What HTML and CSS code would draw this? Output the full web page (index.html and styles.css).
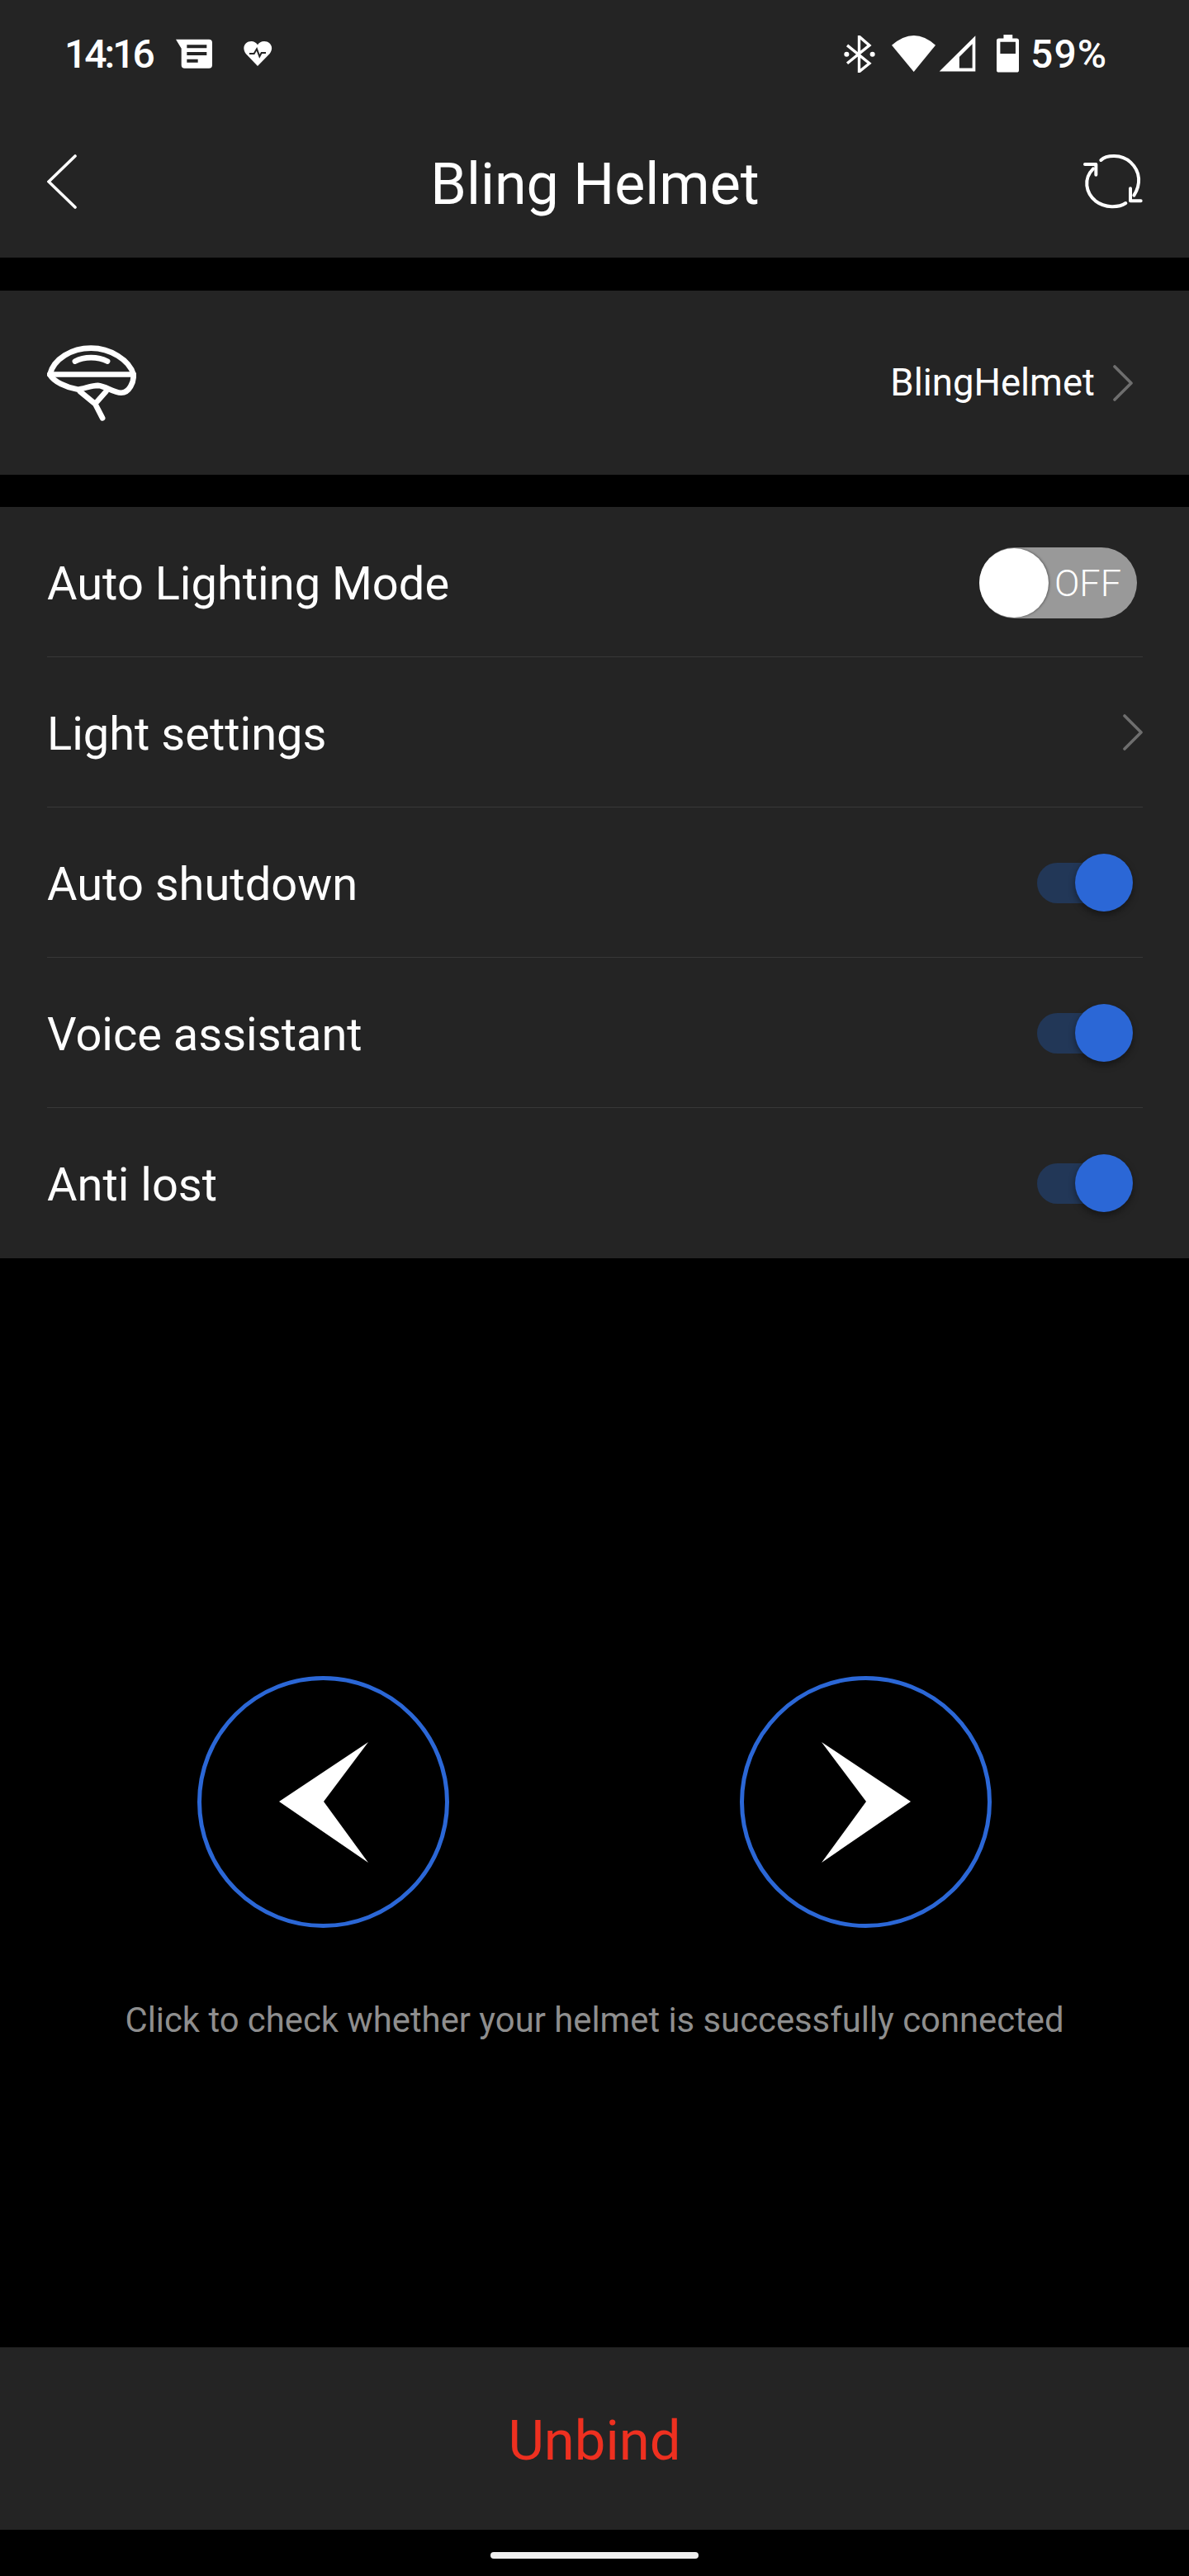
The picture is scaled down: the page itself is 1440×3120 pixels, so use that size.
FILE: index.html
```html
<!DOCTYPE html>
<html lang="en">
<head>
  <meta charset="UTF-8">
  <title>Bling Helmet</title>
  <link rel="stylesheet" href="styles.css">
</head>
<body>
  <header class="top">
    <div class="status">
      <div class="status-left">
        <span class="clock">14:16</span>
        <svg class="ic-notes" viewBox="40 40 132 108"><path fill="#fff" d="M40 42H160Q172 42 172 54V135Q172 147 160 147H72Q60 147 60 135V75Z"/><path fill="#242424" d="M80 62h72v12H80zM80 88h72v12H80zM80 114h40v12H80z"/></svg>
        <svg class="ic-heart" viewBox="284 48 108 94"><path fill="#fff" d="M338 140L295 95C278 70 295 50 315 50C325 50 333 55 338 63C343 55 351 50 362 50C382 50 400 70 382 95Z"/><path fill="none" stroke="#242424" stroke-width="6" d="M308 95H325L335 78L345 105L352 92H368"/></svg>
      </div>
      <div class="status-right">
        <svg class="ic-bt" viewBox="30 25 113 133"><path fill="none" stroke="#fff" stroke-width="10" d="M42 60L122 125L85 155V28L122 60L42 125"/><circle fill="#fff" cx="40" cy="92" r="9"/><circle fill="#fff" cx="133" cy="92" r="9"/></svg>
        <svg class="ic-wifi" viewBox="205 25 157 130"><path fill="#fff" d="M205 60Q285-10 362 60L284 155Z"/></svg>
        <svg class="ic-signal" viewBox="376 28 134 130"><path fill="#fff" fill-rule="evenodd" d="M378 157L508 28V157ZM450 145H497V58L450 105Z"/></svg>
        <svg class="ic-battery" viewBox="585 22 80 136"><path fill="#fff" fill-rule="evenodd" d="M610 22H642V35H657Q665 35 665 43V149Q665 157 657 157H593Q585 157 585 149V43Q585 35 593 35H610ZM598 48V90H653V48Z"/></svg>
        <span class="battery-pct">59%</span>
      </div>
    </div>
    <div class="nav">
      <svg class="ic-back" viewBox="0 0 36 66"><path fill="none" stroke="#fff" stroke-width="3.6" stroke-linecap="round" d="M34 2L2 33L34 64"/></svg>
      <h1 class="title">Bling Helmet</h1>
      <svg class="ic-refresh" viewBox="36 30 216 210"><g fill="none" stroke="#fff" stroke-width="12" stroke-linecap="round" stroke-linejoin="round"><path d="M100 57C120 38 175 34 208 65C245 100 245 145 220 185"/><path d="M207 160V205H245"/><path d="M190 213C165 230 115 232 80 205C45 175 35 125 72 88"/><path d="M42 72H82V110"/></g></svg>
    </div>
  </header>

  <section class="device">
    <svg class="ic-helmet" viewBox="170 232 325 275"><g fill="none" stroke="#fff" stroke-width="20" stroke-linecap="round" stroke-linejoin="round"><path d="M180 338C195 280 260 242 330 242C400 242 470 285 485 338C487 365 470 405 440 405C410 405 385 380 355 378C330 378 300 392 280 392C240 385 195 365 180 338Z"/><path d="M180 338H485"/><path d="M272 290C305 272 355 272 390 290"/><path d="M290 400L345 445L385 400M345 445L372 497"/></g></svg>
    <div class="device-link">
      <span class="device-name">BlingHelmet</span>
      <svg class="ic-chevron" viewBox="0 0 24 44"><path fill="none" stroke="#6e6e6e" stroke-width="3.6" stroke-linecap="round" stroke-linejoin="round" d="M2 2L22 22L2 42"/></svg>
    </div>
  </section>

  <section class="settings">
    <div class="row">
      <span class="row-label">Auto Lighting Mode</span>
      <div class="switch-off"><span class="switch-off-knob"></span>OFF</div>
    </div>
    <div class="row">
      <span class="row-label">Light settings</span>
      <svg class="ic-chevron" viewBox="0 0 24 44"><path fill="none" stroke="#6e6e6e" stroke-width="3.6" stroke-linecap="round" stroke-linejoin="round" d="M2 2L22 22L2 42"/></svg>
    </div>
    <div class="row">
      <span class="row-label">Auto shutdown</span>
      <div class="switch-on"><span class="switch-on-knob"></span></div>
    </div>
    <div class="row">
      <span class="row-label">Voice assistant</span>
      <div class="switch-on"><span class="switch-on-knob"></span></div>
    </div>
    <div class="row">
      <span class="row-label">Anti lost</span>
      <div class="switch-on"><span class="switch-on-knob"></span></div>
    </div>
  </section>

  <main class="check">
    <div class="check-buttons">
      <div class="round-btn">
        <svg class="ic-arrow" viewBox="0 0 108 146"><path fill="#fff" d="M108 0L54 72L108 146L0 72Z"/></svg>
      </div>
      <div class="round-btn">
        <svg class="ic-arrow" viewBox="0 0 108 146"><path fill="#fff" d="M0 0L108 72L0 146L54 72Z"/></svg>
      </div>
    </div>
    <p class="check-hint">Click to check whether your helmet is successfully connected</p>
  </main>

  <div class="unbind">Unbind</div>

  <div class="home-area"><span class="home-bar"></span></div>
</body>
</html>
```

FILE: styles.css
```css
* {
  box-sizing: border-box;
}

body {
  margin: 0;
  width: 1440px;
  height: 3120px;
  overflow: hidden;
  display: flex;
  flex-direction: column;
  background: #000;
  color: #fff;
  font-family: Roboto, sans-serif;
}

svg {
  display: block;
  flex: none;
}

.top {
  height: 312px;
  background: #242424;
}

.status {
  height: 132px;
  padding: 0 99px 2px 78px;
  display: flex;
  justify-content: space-between;
  align-items: center;
  font-size: 48px;
  font-weight: 500;
}

.status-left,
.status-right {
  display: flex;
  align-items: center;
}

.clock {
  letter-spacing: -3px;
}

.ic-notes {
  width: 44px;
  height: 36px;
  margin-left: 28px;
}

.ic-heart {
  width: 36px;
  height: 32px;
  margin-left: 37px;
}

.ic-bt {
  width: 38px;
  height: 45px;
}

.ic-wifi {
  width: 53px;
  height: 44px;
  margin-left: 20px;
}

.ic-signal {
  width: 45px;
  height: 44px;
  margin-left: 4px;
}

.ic-battery {
  width: 27px;
  height: 46px;
  margin-left: 25px;
}

.battery-pct {
  margin-left: 14px;
  letter-spacing: 1px;
}

.nav {
  height: 180px;
  padding: 0 56px 4px 57px;
  display: grid;
  grid-template-columns: 1fr auto 1fr;
  align-items: center;
}

.ic-back {
  width: 36px;
  height: 66px;
}

.title {
  margin: 6px 0 0;
  font-size: 70px;
  font-weight: 400;
}

.ic-refresh {
  width: 72px;
  height: 70px;
  justify-self: end;
}

.device {
  height: 223px;
  margin-top: 40px;
  padding: 0 68px 0 57px;
  background: #242424;
  display: flex;
  justify-content: space-between;
  align-items: center;
}

.ic-helmet {
  width: 108px;
  height: 92px;
}

.device-link {
  display: flex;
  align-items: center;
  gap: 22px;
}

.device-name {
  font-size: 45.5px;
}

.ic-chevron {
  width: 24px;
  height: 44px;
}

.settings {
  margin-top: 39px;
  background: #242424;
}

.row {
  height: 182px;
  margin: 0 56px 0 57px;
  padding-top: 1px;
  border-bottom: 1px solid #383838;
  display: flex;
  justify-content: space-between;
  align-items: center;
  font-size: 56px;
}

.row:last-child {
  border-bottom: none;
}

.row-label {
  padding-top: 3px;
}

.switch-off {
  position: relative;
  width: 191px;
  height: 86px;
  margin: 2px 7px 0 0;
  padding-right: 19px;
  border-radius: 43px;
  background: #999;
  display: flex;
  justify-content: flex-end;
  align-items: center;
  font-size: 45px;
  font-weight: 300;
}

.switch-off-knob {
  position: absolute;
  top: 1px;
  left: 0;
  width: 84px;
  height: 84px;
  border-radius: 50%;
  background: #fff;
  box-shadow: 1px 0 3px rgba(0, 0, 0, 0.4);
}

.switch-on {
  position: relative;
  width: 104px;
  height: 49px;
  margin-right: 24px;
  border-radius: 25px;
  background: #223757;
}

.switch-on-knob {
  position: absolute;
  top: -11px;
  right: -12px;
  width: 70px;
  height: 70px;
  border-radius: 50%;
  background: #2b67d6;
  box-shadow: 0 4px 8px rgba(0, 0, 0, 0.4);
}

.check {
  flex: 1;
  padding-top: 506px;
}

.check-buttons {
  display: flex;
  justify-content: center;
  gap: 352px;
}

.round-btn {
  width: 305px;
  height: 305px;
  border: 5px solid #2b67d6;
  border-radius: 50%;
  display: flex;
  justify-content: center;
  align-items: center;
}

.ic-arrow {
  width: 108px;
  height: 146px;
}

.check-hint {
  margin: 87px 0 0;
  text-align: center;
  font-size: 41.8px;
  color: #8e8e8e;
}

.unbind {
  height: 221px;
  padding-top: 4px;
  background: #242424;
  display: flex;
  justify-content: center;
  align-items: center;
  font-size: 67px;
  color: #ee3020;
}

.home-area {
  height: 56px;
  padding-top: 27px;
  display: flex;
  justify-content: center;
}

.home-bar {
  width: 252px;
  height: 8px;
  border-radius: 4px;
  background: #eee;
}
```
